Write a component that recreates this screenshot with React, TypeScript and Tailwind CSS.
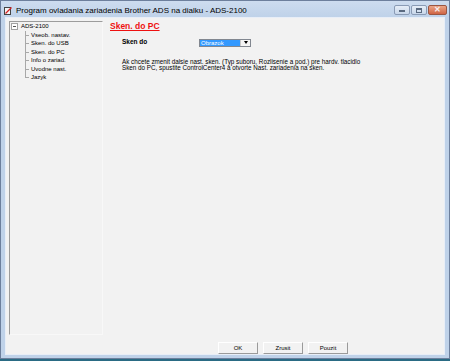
import React from "react";

const items = ["Vseob. nastav.", "Sken. do USB", "Sken. do PC", "Info o zariad.", "Uvodne nast.", "Jazyk"];

function TitleIcon() {
  return (
    <svg width="8" height="8" viewBox="0 0 8 8" className="shrink-0">
      <rect x="0.5" y="0.5" width="6" height="7" fill="#f4f4f4" stroke="#444" strokeWidth="1" />
      <line x1="1.5" y1="6.5" x2="7.5" y2="0.5" stroke="#d42020" strokeWidth="1.2" />
    </svg>
  );
}

export default function App() {
  return (
    <div className="w-[450px] h-[361px] overflow-hidden bg-[#2a6b84] font-['Liberation_Sans',Arial,sans-serif]">
      <div className="w-[450px] h-[359px] border border-[#6d7f9c] bg-[#bfd2e9] flex flex-col">
        <div className="h-[16px] shrink-0 flex items-start bg-gradient-to-b from-[#cddcef] to-[#bfd2e9]">
          <div className="flex items-center h-[19px] pl-[3px] gap-[4px]">
            <TitleIcon />
            <span className="text-[8px] leading-none text-black whitespace-nowrap">
              Program ovladania zariadenia Brother ADS na dialku - ADS-2100
            </span>
          </div>
          <div className="ml-auto flex items-start pt-[4px] pr-[2px] gap-[1px]">
            <div className="w-[16px] h-[10px] rounded-[2px] border border-[#8a9bb5] bg-gradient-to-b from-[#e6edf7] to-[#c8d7ea] flex items-end justify-center pb-[2px]">
              <div className="w-[6px] h-[2px] bg-[#5a6a80]" />
            </div>
            <div className="w-[16px] h-[10px] rounded-[2px] border border-[#8a9bb5] bg-gradient-to-b from-[#e6edf7] to-[#c8d7ea] flex items-center justify-center">
              <div className="w-[6px] h-[5px] border border-[#5a6a80] border-t-2" />
            </div>
            <div className="w-[19px] h-[10px] rounded-[2px] border border-[#9a5642] bg-gradient-to-b from-[#eba587] to-[#cf6444] flex items-center justify-center">
              <span className="text-[8px] leading-none font-bold text-[#f6eeee]">✕</span>
            </div>
          </div>
        </div>
        <div className="flex-1 px-[4px] pb-[3px] min-h-0">
          <div className="h-full border border-[#e8eef7] bg-[#f2f2f2] flex flex-col">
            <div className="flex-1 min-h-0 flex pl-[3px] pt-[3px] pb-[7px]">
              <div className="w-[94px] shrink-0 h-full border-l border-t border-l-[#9c9c9c] border-t-[#9c9c9c] border-r border-b border-r-[#f8f8f8] border-b-[#f8f8f8] text-[6px] leading-none text-black">
                <div className="h-[8.5px] flex items-center pl-[1px]">
                  <div className="w-[7px] h-[7px] border border-[#a2a2a2] bg-white flex items-center justify-center">
                    <div className="w-[3px] h-px bg-[#555]" />
                  </div>
                  <span className="ml-[3px]">ADS-2100</span>
                </div>
                <div className="ml-[15px]">
                  {items.map((t, i) => (
                    <div key={t} className="h-[8.5px] flex items-center">
                      <div className="relative w-[5px] h-full shrink-0">
                        <div
                          className={
                            i === items.length - 1
                              ? "absolute left-0 top-0 w-px h-1/2 bg-[#a8a8a8]"
                              : "absolute left-0 top-0 w-px h-full bg-[#a8a8a8]"
                          }
                        />
                        <div className="absolute left-0 top-1/2 w-[4px] h-px bg-[#a8a8a8]" />
                      </div>
                      <span className="ml-[1px] whitespace-nowrap">{t}</span>
                    </div>
                  ))}
                </div>
              </div>
              <div className="pl-[7px] flex-1 flex flex-col items-start">
                <div className="text-[8.5px] leading-none font-bold text-[#ee1111] underline mt-[1px]">Sken. do PC</div>
                <div className="flex items-center mt-[8px] h-[8px] pl-[12px]">
                  <div className="w-[77px] shrink-0 text-[6.5px] leading-none font-bold text-black">Sken do</div>
                  <div className="w-[52px] shrink-0 h-[8px] border border-[#828790] bg-white flex">
                    <div className="w-[40px] shrink-0 bg-[#3399ff] text-white text-[6px] leading-none flex items-center pl-[1px]">Obrazok</div>
                    <div className="flex-1 bg-[#f4f4f4] border-l border-[#c8c8c8] flex items-center justify-center">
                      <div className="w-0 h-0 border-l-[2.5px] border-r-[2.5px] border-t-[3px] border-l-transparent border-r-transparent border-t-black" />
                    </div>
                  </div>
                </div>
                <div className="ml-[12px] mt-[12px] text-[6.3px] leading-[6.5px] text-black whitespace-nowrap">
                  <div>Ak chcete zmenit dalsie nast. sken. (Typ suboru, Rozlisenie a pod.) pre hardv. tlacidlo</div>
                  <div>Sken do PC, spustite ControlCenter4 a otvorte Nast. zariadenia na sken.</div>
                </div>
              </div>
            </div>
            <div className="h-[12px] shrink-0 flex pl-[212px] gap-[5px]">
              {["OK", "Zrusit", "Pouzit"].map((b) => (
                <div
                  key={b}
                  className="w-[40px] h-[12px] border border-t-white border-l-white border-r-[#9a9a9a] border-b-[#9a9a9a] bg-[#f2f2f2] flex items-center justify-center text-[6px] leading-none text-black"
                >
                  {b}
                </div>
              ))}
            </div>
          </div>
        </div>
      </div>
    </div>
  );
}
